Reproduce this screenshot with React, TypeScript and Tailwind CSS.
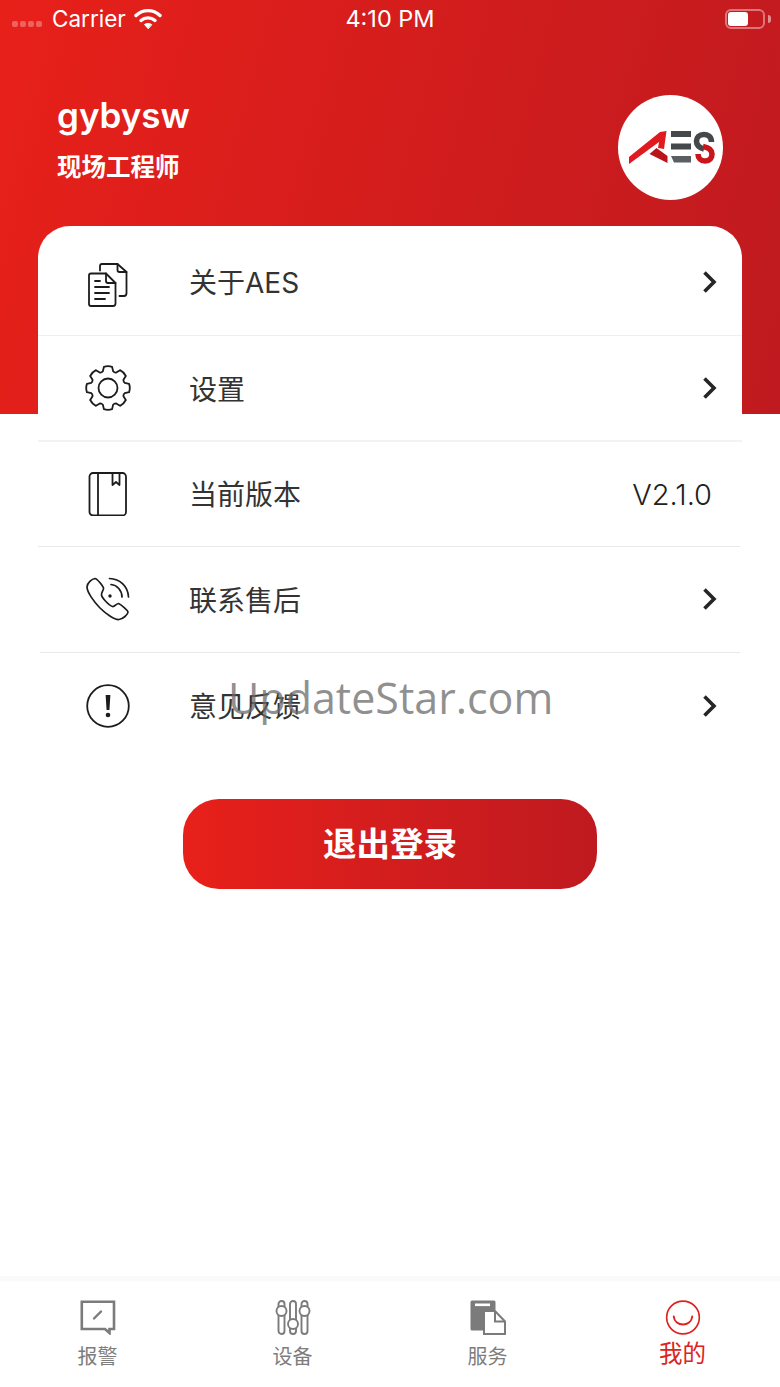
const sans = "font-['Inter','Noto_Sans_CJK_SC',sans-serif]"

function Chevron() {
  return (
    <svg width="16" height="24" viewBox="0 0 16 24" fill="none" stroke="#262626" strokeWidth="3.6" strokeLinejoin="miter">
      <path d="M2.5 2.5 L12 12 L2.5 21.5" />
    </svg>
  )
}

function DocsIcon() {
  return (
    <svg className="mt-[6px]" width="40" height="44" viewBox="0 0 40 44" fill="none" stroke="#1c1c1c" strokeWidth="1.8" strokeLinecap="round" strokeLinejoin="round">
      <path d="M12 7.5 V3 Q12 1 14 1 H29.5 L38.5 9 V30 Q38.5 33 36 33 H31.5" />
      <path d="M29.5 1 V7 Q29.5 9 31.5 9 H38.5" />
      <path d="M3 10.5 H18 L27.5 20 V40.5 Q27.5 43 25 43 H3 Q1 43 1 41 V12.5 Q1 10.5 3 10.5 Z" />
      <path d="M18 10.5 V18 Q18 20 20 20 H27.5" />
      <path d="M7 18 H12 M7 24 H21 M7 30 H21 M7 36 H17" />
    </svg>
  )
}

function GearIcon() {
  const teeth = [0, 45, 90, 135, 180, 225, 270, 315]
  const pts: string[] = []
  teeth.forEach((a, i) => {
    const p = (deg: number, r: number) => {
      const t = ((a + deg - 90) * Math.PI) / 180
      return `${(23 + r * Math.cos(t)).toFixed(2)} ${(23 + r * Math.sin(t)).toFixed(2)}`
    }
    pts.push(`${i === 0 ? "M" : "L"}${p(-11, 21.5)}`)
    pts.push(`Q${p(0, 22.5)} ${p(11, 21.5)}`)
    pts.push(`L${p(17, 17.5)}`)
    pts.push(`Q${p(22.5, 16.5)} ${p(28, 17.5)}`)
  })
  return (
    <svg width="46" height="46" viewBox="0 0 46 46" fill="none" stroke="#1c1c1c" strokeWidth="1.8" strokeLinejoin="round">
      <path d={pts.join(" ") + " Z"} />
      <circle cx="23" cy="23" r="9.5" />
    </svg>
  )
}

function BookIcon() {
  return (
    <svg width="40" height="44" viewBox="0 0 40 44" fill="none" stroke="#1c1c1c" strokeWidth="1.8" strokeLinejoin="round">
      <rect x="1.5" y="1" width="36.5" height="42.5" rx="3.5" />
      <path d="M10 1 V43.5" />
      <path d="M24.5 1 V13 L28 10 L31.5 13 V1" />
    </svg>
  )
}

function PhoneIcon() {
  return (
    <svg width="44" height="44" viewBox="0 0 44 44" fill="none" stroke="#1c1c1c" strokeWidth="1.7" strokeLinecap="round" strokeLinejoin="round">
      <path d="M9 1.5 C6 2 1 6 1 10 C1 15 8 25 14 31 C20 37 29 43 33 42.5 C37 42 42 37.5 42 35 C42 33.5 35 27.5 32.5 26.5 C31 26 28.5 30 26.5 29.5 C23 28.5 16 21 15.5 18 C15 15.5 18 13 17.5 11 C17 9 11 1.5 9 1.5 Z" />
      <path d="M23.5 1.5 C34 2 42 9 42.5 20" />
      <path d="M25 7.5 C31 8 36 13.5 36 20" />
      <circle cx="24" cy="19" r="1.7" fill="#1c1c1c" stroke="none" />
    </svg>
  )
}

function AlertIcon() {
  return (
    <svg width="44" height="44" viewBox="0 0 44 44" fill="none">
      <circle cx="22" cy="22" r="20.8" stroke="#1c1c1c" strokeWidth="1.8" />
      <path d="M19.6 11 H24.4 L23.4 26 H20.6 Z" fill="#1c1c1c" />
      <circle cx="22" cy="31" r="2.3" fill="#1c1c1c" />
    </svg>
  )
}

function Logo() {
  return (
    <svg width="96" height="46" viewBox="0 0 96 46" fill="none">
      <path d="M6 32 L37 7 L43.5 6 L41 24 L35 23 L36 17 L6 39 Z" fill="#e01a1e" />
      <path d="M26.5 29 L33.5 23 L44.5 31 L44.5 38 Z" fill="#b8141a" />
      <rect x="48" y="6" width="20" height="6" fill="#44484b" />
      <rect x="48" y="18.5" width="20" height="6" fill="#44484b" />
      <path d="M48 31 H68 V37.5 H51 Z" fill="#5c5f62" />
      <path d="M88.5 17 C88.5 11 84 9.5 81 9.5 C76 9.5 73.5 12.5 73.5 16 C73.5 20.5 77.5 23 81 24" stroke="#44484b" strokeWidth="5.6" />
      <path d="M75 29 C75 33 78 36 82 36 C86.5 36 89 33 89 29 C89 25 85.5 22.5 80 21.5" stroke="#c9161c" strokeWidth="5.6" />
    </svg>
  )
}

function AlarmTab() {
  return (
    <svg width="36" height="35" viewBox="0 0 36 35" fill="none">
      <path d="M1.8 1.8 H34 V29 H29.5 V33 L25 29 H1.8 Z" stroke="#7b7b7b" strokeWidth="2.6" />
      <path d="M14 18.5 L21 11.5" stroke="#7b7b7b" strokeWidth="2.4" strokeLinecap="round" />
    </svg>
  )
}

function DeviceTab() {
  return (
    <svg width="36" height="35" viewBox="0 0 36 35" fill="none" stroke="#7b7b7b" strokeWidth="1.9">
      <rect x="3.5" y="1" width="6" height="33" rx="3" />
      <rect x="15" y="1" width="6" height="33" rx="3" />
      <rect x="26.5" y="1" width="6" height="33" rx="3" />
      <circle cx="6.5" cy="11" r="5" fill="#fff" />
      <circle cx="18" cy="24" r="5" fill="#fff" />
      <circle cx="29.5" cy="11" r="5" fill="#fff" />
    </svg>
  )
}

function ServiceTab() {
  return (
    <svg width="36" height="35" viewBox="0 0 36 35" fill="none">
      <path d="M2 0.5 H24 Q25.5 0.5 25.5 2 V10 H14 V30.5 H2 Q0.5 30.5 0.5 29 V2 Q0.5 0.5 2 0.5 Z" fill="#7b7b7b" />
      <rect x="5" y="3.5" width="15" height="2.6" fill="#fff" />
      <path d="M14 11 H25 L35 21.5 V34 H14 Z" stroke="#7b7b7b" strokeWidth="2" fill="#fff" />
      <path d="M25 11 V21.5 H35" stroke="#7b7b7b" strokeWidth="2" />
    </svg>
  )
}

function MineTab() {
  return (
    <svg width="36" height="35" viewBox="0 0 36 36" fill="none" stroke="#dc2320" strokeWidth="1.7">
      <circle cx="18" cy="18" r="16.8" />
      <path d="M8.5 17 C9.5 28 26.5 28 27.5 17" strokeWidth="2" strokeLinecap="round" />
    </svg>
  )
}

function Row({ icon, label, right, h }: { icon: React.ReactNode, label: string, right?: string, h: string }) {
  return (
    <div className={`flex items-center pl-[47px] pr-[24px] ${h}`}>
      <div className="flex w-[46px] justify-center">{icon}</div>
      <div className={`ml-[58px] flex-1 text-[28px] leading-none text-[#333] ${right ? "pt-[1px]" : "pt-[3px]"}`}>{label}</div>
      {right ? <div className="mr-[6px] text-[29px] font-light leading-none text-[#222]">{right}</div> : <Chevron />}
    </div>
  )
}

function Tab({ icon, label, active }: { icon: React.ReactNode, label: string, active?: boolean }) {
  return (
    <div className="flex flex-1 flex-col items-center pt-[19px]">
      {icon}
      <div className={active ? "mt-[3px] text-[23.5px] leading-[32px] text-[#dc2320]" : "mt-[8px] text-[20px] leading-[28px] text-[#7d7d7d]"}>{label}</div>
    </div>
  )
}

export default function App() {
  return (
    <div className={`relative flex h-[1387px] w-[780px] flex-col overflow-hidden bg-white ${sans}`}>
      <div className="h-[414px] shrink-0 bg-[linear-gradient(105deg,#e8201a,#bf1a20)]">
        <div className="flex h-[38px] items-center justify-between px-[9px] text-white">
          <div className="flex w-[260px] items-center">
            <div className="ml-[3px] flex gap-[2px] pt-[10px]">
              <span className="h-[6px] w-[6px] rounded-[2px] bg-white/30" />
              <span className="h-[6px] w-[6px] rounded-[2px] bg-white/30" />
              <span className="h-[6px] w-[6px] rounded-[2px] bg-white/30" />
              <span className="h-[6px] w-[6px] rounded-[2px] bg-white/30" />
            </div>
            <span className="ml-[10px] text-[22.5px] leading-none">Carrier</span>
            <svg className="ml-[8px]" width="28" height="22" viewBox="0 0 28 22" fill="none" stroke="#fff" strokeWidth="3.4" strokeLinecap="round">
              <path d="M2 7.5 C9 1 19 1 26 7.5" />
              <path d="M7 12.5 C11 9 17 9 21 12.5" />
              <path d="M14 20.5 L10.5 16.5 C12.5 15 15.5 15 17.5 16.5 Z" fill="#fff" strokeWidth="1" strokeLinejoin="round" />
            </svg>
          </div>
          <span className="text-[23.5px] leading-none">4:10 PM</span>
          <div className="flex w-[260px] items-center justify-end">
            <div className="h-[20px] w-[40px] rounded-[6px] border-2 border-white/40 p-[1px]">
              <div className="h-full w-[20px] rounded-[3px] bg-white" />
            </div>
            <span className="ml-[3px] h-[8px] w-[3px] rounded-r-full bg-white/50" />
          </div>
        </div>
        <div className="flex items-start justify-between px-[57px] pt-[55px]">
          <div>
            <div className="pt-[1px] text-[35px] font-semibold leading-[42px] text-white">gybysw</div>
            <div className="mt-[16px] text-[24.5px] font-bold leading-[30px] text-white">现场工程师</div>
          </div>
          <div className="mt-[2px] flex h-[105px] w-[105px] items-center justify-center rounded-full bg-white">
            <Logo />
          </div>
        </div>
      </div>

      <div className="relative mx-[38px] mt-[-188px] rounded-t-[32px] bg-white">
        <Row icon={<DocsIcon />} label="关于AES" h="h-[109px] pt-[2px]" />
        <div className="h-px bg-[#efefef]" />
        <Row icon={<GearIcon />} label="设置" h="h-[104px]" />
        <div className="h-[2px] bg-[#f3f3f3]" />
        <Row icon={<BookIcon />} label="当前版本" right="V2.1.0" h="h-[104px]" />
        <div className="mr-[2px] h-px bg-[#e9e9e9]" />
        <Row icon={<PhoneIcon />} label="联系售后" h="h-[105px] pb-[1px]" />
        <div className="ml-[2px] mr-[2px] h-px bg-[#e9e9e9]" />
        <Row icon={<AlertIcon />} label="意见反馈" h="h-[106px] pb-[1px]" />
      </div>

      <button className="mx-auto mt-[40px] flex h-[90px] w-[414px] items-center justify-center rounded-[36px] bg-gradient-to-r from-[#e8201a] to-[#bf1a20] pt-[1px] text-[33.5px] font-bold text-white">
        退出登录
      </button>

      <div className="flex-1" />

      <div className="h-[5px] bg-[#fafafa]" />
      <div className="flex h-[106px] bg-white">
        <Tab icon={<AlarmTab />} label="报警" />
        <Tab icon={<DeviceTab />} label="设备" />
        <Tab icon={<ServiceTab />} label="服务" />
        <Tab icon={<MineTab />} label="我的" active />
      </div>

      <div className="absolute left-[228px] top-[670px] font-['Open_Sans',sans-serif] text-[43px] leading-[56px] text-[#6b6b6b]/75">UpdateStar.com</div>
    </div>
  )
}
